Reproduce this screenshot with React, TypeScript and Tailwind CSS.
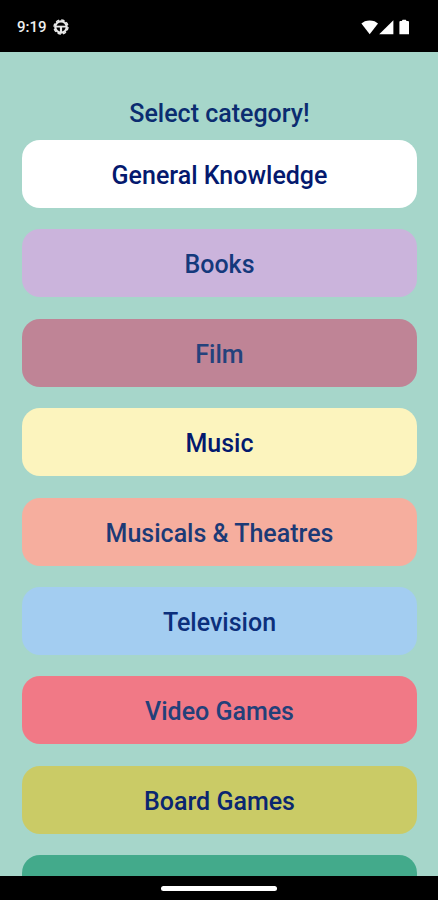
type Category = { name: string; style: string };

const categories: Category[] = [
  { name: "General Knowledge", style: "bg-white text-[#04196e]" },
  { name: "Books", style: "bg-[#cbb4dc] text-[#14397c]" },
  { name: "Film", style: "bg-[#bf8496] text-[#24427c]" },
  { name: "Music", style: "bg-[#fcf4be] text-[#04196e]" },
  { name: "Musicals & Theatres", style: "bg-[#f6ae9e] text-[#1c3a76]" },
  { name: "Television", style: "bg-[#a3cdf1] text-[#0c2f7c]" },
  { name: "Video Games", style: "bg-[#f17986] text-[#234079]" },
  { name: "Board Games", style: "bg-[#cacb66] text-[#0a2670]" },
];

function CategoryButton({ name, style }: Category) {
  return (
    <button
      type="button"
      className={`flex h-[68px] w-full shrink-0 items-center justify-center rounded-[18px] pt-1 text-[25px] leading-8 font-medium ${style}`}
    >
      {name}
    </button>
  );
}

function StatusBar() {
  return (
    <header className="flex h-[52px] shrink-0 items-center justify-between bg-black pt-px pr-7 pl-[17px] text-white">
      <div className="flex items-center gap-[6px]">
        <span className="text-[15px] leading-5 font-medium text-[#eee]">9:19</span>
        <svg className="size-4" viewBox="0 0 16 16" fill="none" stroke="#e8e8e8" aria-hidden="true">
          <circle cx="8" cy="8" r="5.7" strokeWidth="2.2" />
          <circle cx="8" cy="8" r="7" strokeWidth="1.4" strokeDasharray="3.4 2.1" />
          <path d="M2.5 7.6h11" strokeWidth="1.8" />
          <path d="M8 7.6v5.5" strokeWidth="2.2" />
        </svg>
      </div>
      <svg className="h-4 w-[49px]" viewBox="0 0 49 16" fill="#fff" aria-hidden="true">
        <path d="M.4 4.6 3.8 2.2Q8.7.6 13.6 2.2L17 4.6 8.7 15.2z" />
        <path d="M32.4 1.2v14H18.2z" />
        <path d="M38.4 3q0-1 1-1h1.4l.8-1.2h3.2l.8 1.2H47q1 0 1 1v12.2h-9.6z" />
      </svg>
    </header>
  );
}

export default function App() {
  return (
    <div className="flex h-screen flex-col bg-[#a6d6ca] font-['Roboto',sans-serif]">
      <StatusBar />
      <main className="flex min-h-0 flex-1 flex-col overflow-hidden pt-[46px] pr-[21px] pl-[22px]">
        <h1 className="shrink-0 pb-[10px] text-center text-[25px] leading-8 font-medium text-[#0b2c70]">
          Select category!
        </h1>
        <div className="flex min-h-0 flex-1 flex-col justify-between gap-5">
          {categories.map((category) => (
            <CategoryButton key={category.name} {...category} />
          ))}
          <div className="h-[21px] shrink-0 overflow-hidden">
            <button
              type="button"
              aria-label="More categories"
              className="block h-[68px] w-full rounded-[18px] bg-[#43aa8b]"
            />
          </div>
        </div>
      </main>
      <footer className="flex h-6 shrink-0 items-center justify-center bg-black">
        <div className="h-[5px] w-[116px] rounded-full bg-white" />
      </footer>
    </div>
  );
}
